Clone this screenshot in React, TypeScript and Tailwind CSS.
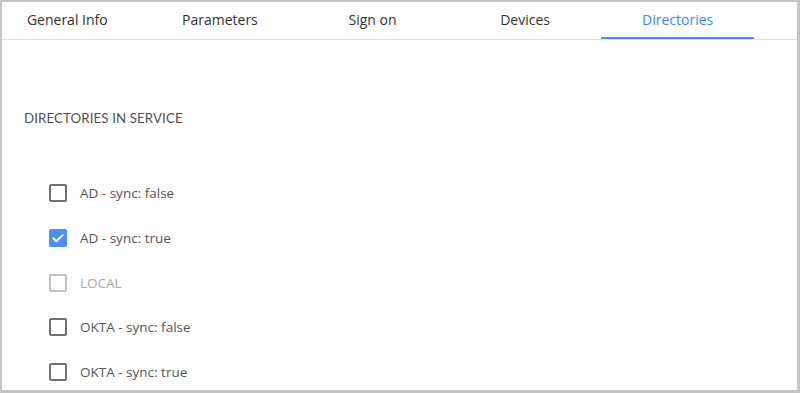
import React from "react";

const tabs = ["General Info", "Parameters", "Sign on", "Devices", "Directories"];

const items = [
  { label: "AD - sync: false", checked: false, disabled: false },
  { label: "AD - sync: true", checked: true, disabled: false },
  { label: "LOCAL", checked: false, disabled: true },
  { label: "OKTA - sync: false", checked: false, disabled: false },
  { label: "OKTA - sync: true", checked: false, disabled: false },
];

function Box({ checked, disabled }: { checked: boolean; disabled: boolean }) {
  if (checked) {
    return (
      <div className="w-[18px] h-[18px] rounded-[2px] bg-[#4d8ef7] flex items-center justify-center">
        <svg width="14" height="14" viewBox="0 0 24 24" fill="none">
          <path d="M4 12.5l5.2 5L20 7" stroke="white" strokeWidth="3.2" strokeLinecap="round" strokeLinejoin="round" />
        </svg>
      </div>
    );
  }
  return (
    <div
      className={
        "w-[18px] h-[18px] rounded-[2px] border-2 " +
        (disabled ? "border-[#c2c2c2]" : "border-[#707070]")
      }
    />
  );
}

export default function App() {
  return (
    <div
      className="w-[800px] h-[393px] bg-white border-l-2 border-t-2 border-r-[3px] border-b-[3px] border-[#c4c4c4] overflow-hidden"
      style={{ fontFamily: "'Open Sans', 'Noto Sans', sans-serif" }}
    >
      <div className="h-[38px] border-b border-[#d3e2f7] overflow-hidden">
        <div className="flex ml-[-11px] h-full">
          {tabs.map((t) => {
            const active = t === "Directories";
            return (
              <div
                key={t}
                className={
                  "w-[152.6px] shrink-0 flex items-center justify-center text-[14px] font-medium relative " +
                  (active ? "text-[#3d86f5]" : "text-[#333333]")
                }
              >
                <span className="-mt-[3px]">{t}</span>
                {active && <div className="absolute left-0 right-0 bottom-0 h-[2px] bg-[#4a8cf7]" />}
              </div>
            );
          })}
        </div>
      </div>
      <div className="pl-[22px] pt-[70px]">
        <div
          className="text-[13.3px] font-normal text-[#505050] leading-[16px] tracking-[0.1px]"
          style={{ fontFamily: "Lato, 'Open Sans', sans-serif" }}
        >
          DIRECTORIES IN SERVICE
        </div>
        <div className="mt-[45px] pl-[25px] flex flex-col">
          {items.map((it) => (
            <div key={it.label} className="h-[44.7px] flex items-center gap-[13px]">
              <Box checked={it.checked} disabled={it.disabled} />
              <span
                className={
                  "text-[13.5px] " + (it.disabled ? "text-[#a8a8a8]" : "text-[#555555]")
                }
              >
                {it.label}
              </span>
            </div>
          ))}
        </div>
      </div>
    </div>
  );
}
